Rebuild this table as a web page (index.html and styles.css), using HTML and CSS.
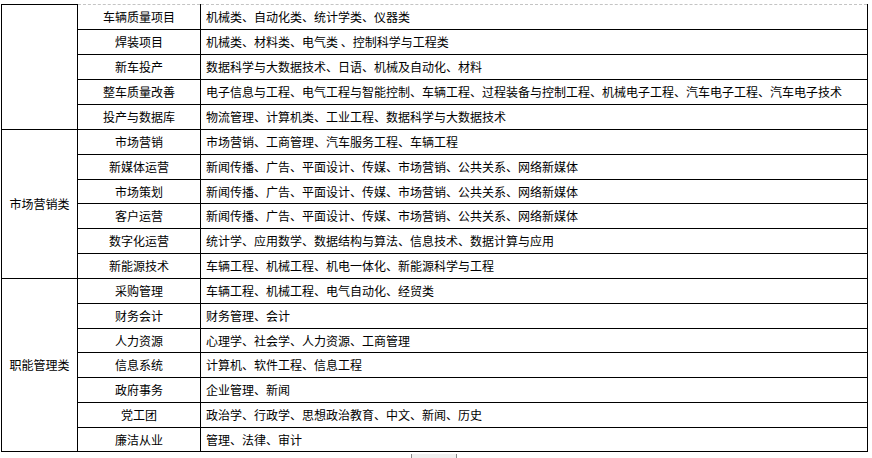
FILE: index.html
```html
<!DOCTYPE html>
<html lang="zh-CN">
<head>
<meta charset="utf-8">
<title>岗位与专业对照表</title>
<link rel="stylesheet" href="styles.css">
</head>
<body>
<div class="sheet">
  <div class="cat r5 first"></div>
  <div class="job first">车辆质量项目</div><div class="major first">机械类、自动化类、统计学类、仪器类</div>
  <div class="job">焊装项目</div><div class="major">机械类、材料类、电气类 、控制科学与工程类</div>
  <div class="job">新车投产</div><div class="major">数据科学与大数据技术、日语、机械及自动化、材料</div>
  <div class="job">整车质量改善</div><div class="major">电子信息与工程、电气工程与智能控制、车辆工程、过程装备与控制工程、机械电子工程、汽车电子工程、汽车电子技术</div>
  <div class="job">投产与数据库</div><div class="major">物流管理、计算机类、工业工程、数据科学与大数据技术</div>

  <div class="cat r6">市场营销类</div>
  <div class="job">市场营销</div><div class="major">市场营销、工商管理、汽车服务工程、车辆工程</div>
  <div class="job">新媒体运营</div><div class="major">新闻传播、广告、平面设计、传媒、市场营销、公共关系、网络新媒体</div>
  <div class="job">市场策划</div><div class="major">新闻传播、广告、平面设计、传媒、市场营销、公共关系、网络新媒体</div>
  <div class="job">客户运营</div><div class="major">新闻传播、广告、平面设计、传媒、市场营销、公共关系、网络新媒体</div>
  <div class="job">数字化运营</div><div class="major">统计学、应用数学、数据结构与算法、信息技术、数据计算与应用</div>
  <div class="job">新能源技术</div><div class="major">车辆工程、机械工程、机电一体化、新能源科学与工程</div>

  <div class="cat r7">职能管理类</div>
  <div class="job">采购管理</div><div class="major">车辆工程、机械工程、电气自动化、经贸类</div>
  <div class="job">财务会计</div><div class="major">财务管理、会计</div>
  <div class="job">人力资源</div><div class="major">心理学、社会学、人力资源、工商管理</div>
  <div class="job">信息系统</div><div class="major">计算机、软件工程、信息工程</div>
  <div class="job">政府事务</div><div class="major">企业管理、新闻</div>
  <div class="job">党工团</div><div class="major">政治学、行政学、思想政治教育、中文、新闻、历史</div>
  <div class="job">廉洁从业</div><div class="major">管理、法律、审计</div>
</div>
<div class="handle"></div>
</body>
</html>
```
FILE: styles.css
```css
html, body {
  margin: 0;
  padding: 0;
  background: #fff;
}

body {
  font-family: "Noto Sans CJK SC", "Noto Sans", sans-serif;
  font-size: 12px;
  color: #000;
}

.sheet {
  display: grid;
  width: 867px;
  box-sizing: border-box;
  margin: 4px 0 0 1px;
  padding: 0 1px 1px 1px;
  background: #000;
  gap: 1px;
  grid-template-columns: 75px 122px 666px;
  grid-template-rows:
    25px 24px 24px 24px 24px
    24px 24px 23px 24px 24px 24px
    24px 24px 23px 24px 24px 24px 23px;
}

.sheet > div {
  background: #fff;
  display: flex;
  align-items: center;
  white-space: nowrap;
  line-height: 1;
}

.cat {
  grid-column: 1;
  justify-content: center;
}

.r5 { grid-row: span 5; }
.r6 { grid-row: span 6; }
.r7 { grid-row: span 7; }

.cat.first {
  border-top: 1px solid #000;
}

.job {
  justify-content: center;
}

.major {
  padding-left: 5px;
}

.job.first,
.major.first {
  border-top: 1px dashed #c4c4c4;
}

.handle {
  width: 44px;
  height: 4px;
  margin: 2px 0 0 411px;
  background: #f0f0f0;
  border-left: 1px solid #8a8a8a;
  border-right: 1px solid #8a8a8a;
}
```
